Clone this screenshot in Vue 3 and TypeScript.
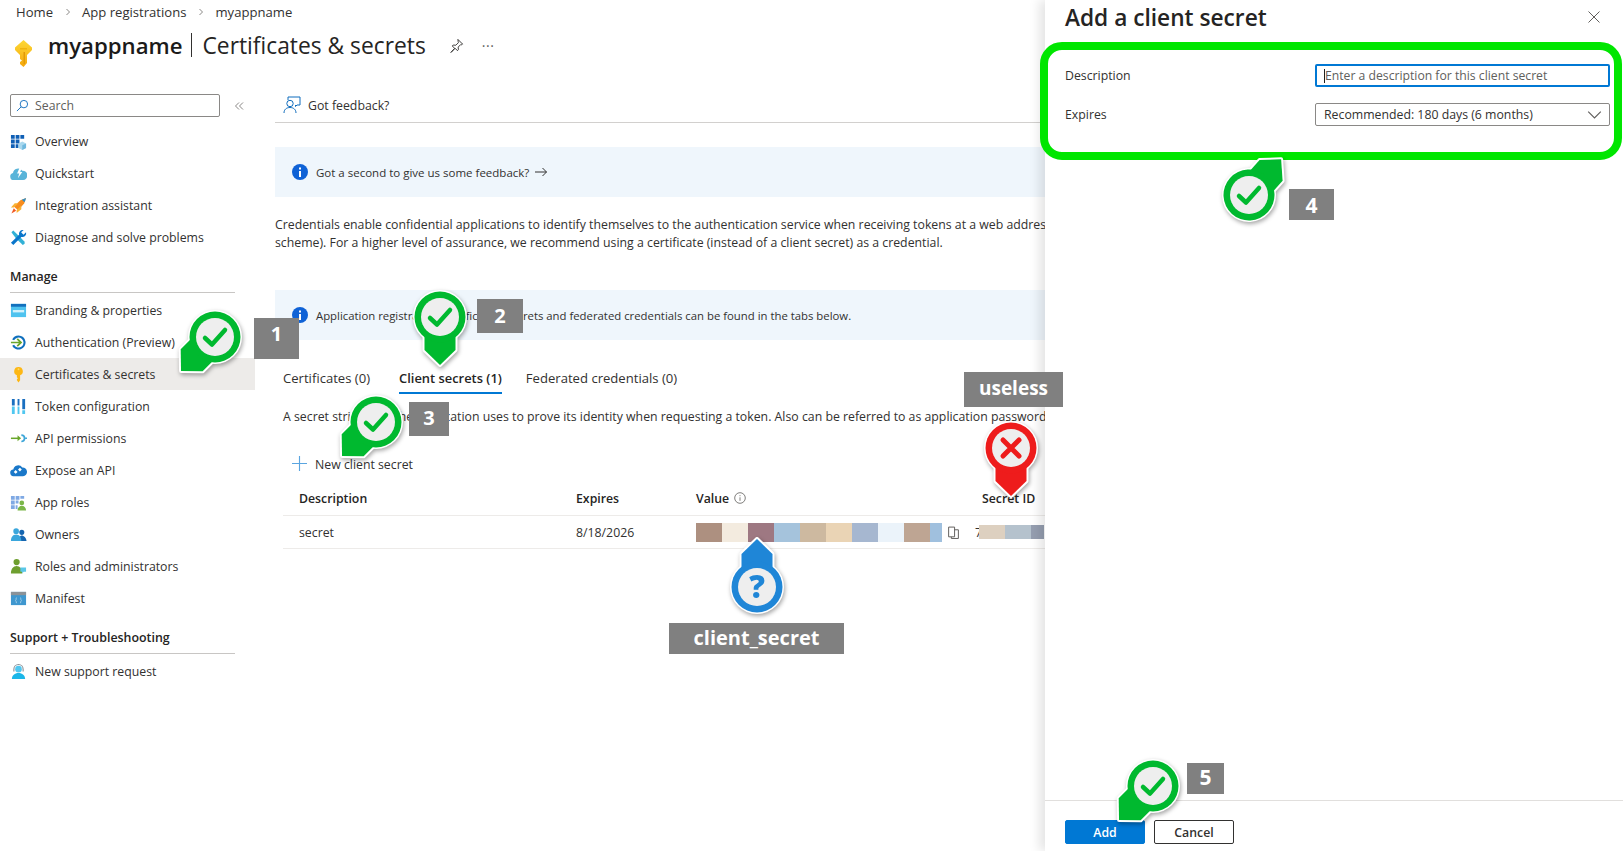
<script setup lang="ts">
type Shape = [string, string]
interface NavItem { label: string; shapes: Shape[]; active?: boolean }

const top: NavItem[] = [
  { label: 'Overview', shapes: [
    ['M1 2h4v4H1zM6 2h4v4H6zM11 2h4v4h-4zM1 7h4v4H1zM6 7h4v4H6zM1 12h4v4H1zM6 12h3v4H6z', '#0f5fb5'],
    ['M13 9l4 2v5l-4 2-4-2v-5z', '#a9d8ee'], ['M13 13l4-2v5l-4 2z', '#6fb8de'] ] },
  { label: 'Quickstart', shapes: [
    ['M4 16a3.800 3.800 0 0 1-.8-7.500A5.400 5.400 0 0 1 13 6a4.900 4.900 0 0 1 .8 10z', '#59b4d9'],
    ['M10.500 2L7.500 9h2.200L8.400 14l4.600-6.500h-2.300L13 2z', '#fff'] ] },
  { label: 'Integration assistant', shapes: [
    ['M4 10L11 3.500 17 1 15 7 8.500 14z', '#f78d1e'], ['M12.500 3L17 1 15.500 5.500z', '#2f8fc9'],
    ['M5 6.500h4L4 11H1zM12 9v4l-5 4v-3z', '#f9b233'], ['M4 12l2.500 2.500-5 3z', '#f15a24'] ] },
  { label: 'Diagnose and solve problems', shapes: [
    ['M1.500 3.500l2-2L10 8l5.500 5.500v2l-2 1.500L6 9.500z', '#32b1d6'],
    ['M13.500 1a4 4 0 0 0-3.900 5L1 14.500 3.500 17 12 8.400a4 4 0 0 0 5-4.900l-2.700 2.500-2.500-2.500L14.500 1z', '#0a76cb'] ] },
]
const manage: NavItem[] = [
  { label: 'Branding & properties', shapes: [
    ['M1 2h16v14H1z', '#4fc3ef'], ['M1 2h16v3H1z', '#1270bd'], ['M3 8.500h12v2.500H3z', '#d5f2fb'] ] },
  { label: 'Authentication (Preview)', shapes: [
    ['M9 1.500a7.500 7.500 0 1 1-6.700 10.900l2-1A5.300 5.300 0 1 0 4.300 6.700l-2-1A7.500 7.500 0 0 1 9 1.500z', '#0f6fbd'],
    ['M1 8.200h8.500L7 5.700l1.300-1.200L13 9l-4.700 4.500L7 12.300l2.500-2.500H1z', '#69a62a'] ] },
  { label: 'Certificates & secrets', active: true, shapes: [
    ['M9 1a4.500 4.500 0 0 1 1.700 8.700V15L9 17.500 7.300 15v-1l1-1-1-1v-2.300A4.500 4.500 0 0 1 9 1z', '#fdb714'],
    ['M9 2.500a1 1 0 1 1 0 2a1 1 0 0 1 0-2z', '#fcd964'] ] },
  { label: 'Token configuration', shapes: [
    ['M2 1h3v7H2zM8 1h2v7H8zM13 1h3v11h-3z', '#1a6fc0'],
    ['M2 9h3v8H2zM8 9h2v8H8zM13 13h3v4h-3z', '#50c7f0'] ] },
  { label: 'API permissions', shapes: [
    ['M1 8h10v1.600H1z', '#69a62a'], ['M8 5.500L11.500 8.800 8 12z', '#69a62a'],
    ['M12 4.500a4.300 4.300 0 1 1 0 8.600v-1.800a2.500 2.500 0 1 0 0-5z', '#3ea6d8'], ['M16 8h2v1.600h-2z', '#3ea6d8'] ] },
  { label: 'Expose an API', shapes: [
    ['M4 15a3.500 3.500 0 0 1-.5-7A5.200 5.200 0 0 1 13 5.800a4.600 4.600 0 0 1 .8 9.200z', '#1a78c9'],
    ['M6 8.500l2 2-2 2-2-2zM10.500 6l2 2-2 2-2-2z', '#fff'] ] },
  { label: 'App roles', shapes: [
    ['M1 2h4v4H1zM6 2h4v4H6zM11 2h4v3h-4zM1 7h4v4H1zM6 7h3v3H6zM1 12h4v4H1zM6 12h2v4H6z', '#7fa9e4'],
    ['M12.500 7a2.500 2.500 0 1 1 0 5a2.500 2.500 0 0 1 0-5z', '#7ab648'], ['M8 17.500c0-3 2-5 4.500-5s4.500 2 4.500 5z', '#7ab648'] ] },
  { label: 'Owners', shapes: [
    ['M12.500 4a2.700 2.700 0 1 1 0 5.400a2.700 2.700 0 0 1 0-5.400zM9 16c0-3.500 1.500-6 3.500-6s5 2.500 5 6z', '#1565b0'],
    ['M6.500 2.500a3 3 0 1 1 0 6a3 3 0 0 1 0-6zM1 16c0-4 2-7 5.500-7s5.500 3 5.500 7z', '#3aa6dc'] ] },
  { label: 'Roles and administrators', shapes: [
    ['M7 1a3.300 3.300 0 1 1 0 6.600A3.300 3.300 0 0 1 7 1zM1 16.500c0-5 2.500-8 6-8s6 3 6 8z', '#6e9f2f'],
    ['M11 10h6v4.500h-2.500l-1.500 2v-2h-2z', '#59c7e8'] ] },
  { label: 'Manifest', shapes: [
    ['M1 2h16v14H1z', '#3f97cf'], ['M1 2h16v3.500H1z', '#8b9298'],
    ['M7 8c-1 0-.8 1-.8 1.700S6 11 5.500 11c.5 0 .7.500.7 1.200S6 14 7 14v-.6c-.5 0-.3-.700-.3-1.300 0-.500-.2-.900-.5-1.100.3-.2.500-.600.5-1.100 0-.600-.2-1.300.3-1.300zM11 8c1 0 .8 1 .8 1.700s.2 1.300.7 1.300c-.5 0-.7.500-.7 1.200S12 14 11 14v-.6c.5 0 .3-.700.3-1.300 0-.500.2-.900.5-1.100-.3-.2-.5-.600-.5-1.100 0-.600.2-1.300-.3-1.300z', '#fff'] ] },
]
const support: NavItem[] = [
  { label: 'New support request', shapes: [
    ['M9 1a5.500 5.500 0 0 1 5.500 5.500V9h-1.200V6.500a4.300 4.300 0 0 0-8.600 0V9H3.500V6.500A5.500 5.500 0 0 1 9 1z', '#8a9299'],
    ['M9 3a3.500 3.500 0 1 1 0 7a3.500 3.500 0 0 1 0-7z', '#50c7f0'],
    ['M2 17c0-4 3-6.500 7-6.500s7 2.500 7 6.500z', '#1bb6e8'] ] },
]

const secretCells = ['#ad9080', '#f3ebdf', '#9e7882', '#a5c3dc', '#cdb9a0', '#ead4b5', '#a6b7d0', '#ebf3fa', '#bea593', '#a0c0de']
const idCells = ['#ddd0c0', '#b5c2cd', '#959eb0']

interface Pin { x: number; y: number; angle: number; color: string; kind: 'check' | 'cross' | 'help' }
const GREEN = '#00b92f'
const pins: Pin[] = [
  { x: 215, y: 337, angle: 45, color: GREEN, kind: 'check' },
  { x: 440, y: 317, angle: 0, color: GREEN, kind: 'check' },
  { x: 376, y: 422, angle: 45, color: GREEN, kind: 'check' },
  { x: 1249, y: 195, angle: -138, color: GREEN, kind: 'check' },
  { x: 1153, y: 786, angle: 45, color: GREEN, kind: 'check' },
  { x: 1011, y: 448, angle: 0, color: '#ee1c1c', kind: 'cross' },
  { x: 757, y: 587, angle: 180, color: '#1f86d7', kind: 'help' },
]
const PIN_SHAPE = 'M-15.500 10L-15.500 33L0 48L15.500 33L15.500 10Z'

interface Tag { text: string; x: number; y: number; w: number; h: number; size: number; lift: number }
const tags: Tag[] = [
  { text: '1', x: 254, y: 318, w: 45, h: 41, size: 20, lift: 10 },
  { text: '2', x: 477, y: 299, w: 46, h: 34, size: 20, lift: 2 },
  { text: '3', x: 409, y: 402, w: 40, h: 34, size: 20, lift: 4 },
  { text: '4', x: 1289, y: 189, w: 45, h: 31, size: 21, lift: 0 },
  { text: '5', x: 1187, y: 763, w: 37, h: 31, size: 21, lift: 3 },
  { text: 'useless', x: 964, y: 372, w: 99, h: 35, size: 19, lift: 4 },
  { text: 'client_secret', x: 669, y: 623, w: 175, h: 31, size: 20, lift: 2 },
]
</script>

<template>
  <div class="page">
    <header class="head">
      <nav class="crumbs">
        <span>Home</span>
        <svg class="crumb-sep" viewBox="0 0 8 8"><path d="M2.500 1l3 3-3 3" /></svg>
        <span>App registrations</span>
        <svg class="crumb-sep" viewBox="0 0 8 8"><path d="M2.500 1l3 3-3 3" /></svg>
        <span>myappname</span>
      </nav>
      <div class="title-row">
        <svg class="title-key" viewBox="0 0 19 27">
          <defs>
            <linearGradient id="keyfill" x1="0" y1="0" x2="0" y2="1">
              <stop offset="0" stop-color="#fdd835" />
              <stop offset="1" stop-color="#f5a70c" />
            </linearGradient>
          </defs>
          <path fill="url(#keyfill)" d="M9.500 0L18 7.500V10l-5 5v8l-3.500 4L6 24v-2l2-1.500L6 19v-4L1 10V7.500z" />
          <path fill="#f0b40e" d="M6 8h7v1.500H6z" />
          <path fill="#e29a08" d="M9.500 12h1.500v12h-1.500z" />
        </svg>
        <h1 class="title"><b>myappname</b><i class="title-sep"></i><span>Certificates &amp; secrets</span></h1>
        <svg class="pin-icon" viewBox="0 0 16 16"><path d="M9.500 1.500l5 5-1 .7-1-.2-2.700 2.700.2 2.800-1 1-2.500-2.500L2 15.500l4-4.500-2.500-2.500 1-1 2.800.2L10 5l-.2-1z" /></svg>
        <span class="more">···</span>
      </div>
    </header>

    <div class="body">
      <aside class="side">
        <div class="search-row">
          <div class="search">
            <svg class="search-icon" viewBox="0 0 14 14"><circle cx="8.500" cy="5.500" r="4" /><path d="M5.500 8.500L1 13" /></svg>
            <span>Search</span>
          </div>
          <svg class="collapse" viewBox="0 0 10 10"><path d="M5 1.500L1.500 5 5 8.500M9 1.500L5.500 5 9 8.500" /></svg>
        </div>
        <ul class="nav first">
          <li v-for="it in top" :key="it.label" class="item">
            <svg class="nav-icon" viewBox="0 0 18 18"><path v-for="(s, i) in it.shapes" :key="i" :d="s[0]" :fill="s[1]" /></svg>
            {{ it.label }}
          </li>
        </ul>
        <h3 class="group manage">Manage</h3>
        <ul class="nav">
          <li v-for="it in manage" :key="it.label" class="item" :class="{ active: it.active }">
            <svg class="nav-icon" viewBox="0 0 18 18"><path v-for="(s, i) in it.shapes" :key="i" :d="s[0]" :fill="s[1]" /></svg>
            {{ it.label }}
          </li>
        </ul>
        <h3 class="group support">Support + Troubleshooting</h3>
        <ul class="nav">
          <li v-for="it in support" :key="it.label" class="item">
            <svg class="nav-icon" viewBox="0 0 18 18"><path v-for="(s, i) in it.shapes" :key="i" :d="s[0]" :fill="s[1]" /></svg>
            {{ it.label }}
          </li>
        </ul>
      </aside>

      <main class="main">
        <div class="feedback">
          <svg class="feedback-icon" viewBox="0 0 18 18">
            <circle cx="7" cy="7.500" r="3.200" />
            <path d="M1 17c0-3.500 2.500-5.500 6-5.500s6 2 6 5.500M5 4V1h12v8h-3l-1.500 1.500V9" />
          </svg>
          <span>Got feedback?</span>
        </div>
        <div class="info first-info">
          <svg class="info-icon" viewBox="0 0 16 16"><circle cx="8" cy="8" r="8" fill="#0f62d6" /><path fill="#fff" d="M7 7h2v6H7zM7 3.500h2v2H7z" /></svg>
          <span>Got a second to give us some feedback?</span>
          <svg class="arrow" viewBox="0 0 14 10"><path d="M1 5h11.500M8.500 1l4 4-4 4" /></svg>
        </div>
        <p class="para">
          Credentials enable confidential applications to identify themselves to the authentication service when receiving tokens at a web addressable location (using an HTTPS<br />
          scheme). For a higher level of assurance, we recommend using a certificate (instead of a client secret) as a credential.
        </p>
        <div class="info second-info">
          <svg class="info-icon" viewBox="0 0 16 16"><circle cx="8" cy="8" r="8" fill="#0f62d6" /><path fill="#fff" d="M7 7h2v6H7zM7 3.500h2v2H7z" /></svg>
          <span>Application registration certificates, secrets and federated credentials can be found in the tabs below.</span>
        </div>
        <div class="tabs">
          <span class="tab">Certificates (0)</span>
          <span class="tab on">Client secrets (1)</span>
          <span class="tab">Federated credentials (0)</span>
        </div>
        <p class="blurb">A secret string that the application uses to prove its identity when requesting a token. Also can be referred to as application password.</p>
        <div class="cmd">
          <svg class="plus" viewBox="0 0 16 16"><path d="M8 0v16M0 8h16" /></svg>
          <span>New client secret</span>
        </div>
        <div class="grid thead">
          <span class="first-col">Description</span>
          <span>Expires</span>
          <span class="value-h">Value
            <svg class="tip" viewBox="0 0 12 12"><circle cx="6" cy="6" r="5.300" /><path d="M6 5.300v3.500M6 3.200v1" /></svg>
          </span>
          <span class="id-h">Secret ID</span>
        </div>
        <div class="grid trow">
          <span class="first-col">secret</span>
          <span>8/18/2026</span>
          <span class="secret-cell">
            <span class="blur">
              <i v-for="c in secretCells" :key="c" :style="{ background: c }"></i>
            </span>
            <svg class="copy" viewBox="0 0 12 12"><path d="M1.500 1h5.500v9H1.500zM7 3.500h3.500V11.500H4V10" /></svg>
          </span>
          <span class="id-cell">7<span class="blur small"><i v-for="c in idCells" :key="c" :style="{ background: c }"></i></span></span>
        </div>
      </main>
    </div>

    <section class="panel">
      <div class="panel-head">
        <h2>Add a client secret</h2>
        <svg class="close" viewBox="0 0 12 12"><path d="M.5.500l11 11M11.500.500l-11 11" /></svg>
      </div>
      <div class="form">
        <label>Description</label>
        <div class="field focus"><i class="caret"></i>Enter a description for this client secret</div>
        <label>Expires</label>
        <div class="field select">
          <span>Recommended: 180 days (6 months)</span>
          <svg class="chev" viewBox="0 0 12 7"><path d="M.5.500L6 6l5.500-5.500" /></svg>
        </div>
      </div>
      <div class="panel-foot">
        <button class="btn primary">Add</button>
        <button class="btn">Cancel</button>
      </div>
    </section>

    <div class="green-frame"></div>

    <svg
      v-for="(p, i) in pins"
      :key="i"
      class="marker"
      viewBox="-60 -60 120 120"
      :style="{ left: p.x - 60 + 'px', top: p.y - 60 + 'px' }"
    >
      <g :transform="`rotate(${p.angle})`">
        <circle r="25" fill="#fff" stroke="#fff" stroke-width="4" />
        <path :d="PIN_SHAPE" fill="#fff" stroke="#fff" stroke-width="4" stroke-linejoin="round" />
        <path :d="PIN_SHAPE" :fill="p.color" />
        <circle r="25.500" :fill="p.color" />
      </g>
      <circle r="19" fill="#eeeeee" />
      <path v-if="p.kind === 'check'" d="M-10 1L-3 7.500L10 -7" fill="none" :stroke="p.color" stroke-width="4.500" stroke-linecap="round" stroke-linejoin="round" />
      <path v-else-if="p.kind === 'cross'" d="M-8 -8L8 8M8 -8L-8 8" fill="none" :stroke="p.color" stroke-width="5" stroke-linecap="round" />
      <text v-else y="11" text-anchor="middle" class="help" :fill="p.color">?</text>
    </svg>

    <div
      v-for="t in tags"
      :key="t.text"
      class="tag"
      :style="{ left: t.x + 'px', top: t.y + 'px', width: t.w + 'px', height: t.h + 'px', fontSize: t.size + 'px', paddingBottom: t.lift + 'px' }"
    >{{ t.text }}</div>
  </div>
</template>

<style>
html, body { margin: 0; background: #fff; overflow: hidden; }
</style>

<style scoped>
.page {
  position: relative;
  width: 1623px;
  height: 851px;
  overflow: hidden;
  background: #fff;
  color: #323130;
  font-family: "Open Sans", "Noto Sans", sans-serif;
  font-size: 12.3px;
}
.head { height: 94px; }
.crumbs { display: flex; align-items: center; height: 25px; box-sizing: border-box; padding: 0 0 2px 16px; gap: 9.500px; font-size: 13.100px; }
.crumb-sep { width: 8px; height: 8px; fill: none; stroke: #8a8886; stroke-width: 1; margin: 0 1px; }
.title-row { display: flex; align-items: center; height: 40px; padding-left: 14px; }
.title-key { width: 19px; height: 27px; margin: 16px 15px 0 0; }
.title { margin: 0; font-size: 22.800px; font-weight: 400; display: flex; align-items: center; color: #252423; white-space: nowrap; }
.title b { font-size: 22.200px; font-weight: 600; color: #1b1a19; }
.title-sep { width: 1px; height: 24px; background: #323130; margin: 0 10px 0 9px; }
.pin-icon { width: 15px; height: 15px; margin-left: 23px; fill: none; stroke: #323130; stroke-width: 1; }
.more { margin-left: 18px; color: #605e5c; font-size: 14px; letter-spacing: .5px; }

.body { display: flex; }
.side { width: 275px; flex: none; }
.search-row { display: flex; align-items: center; height: 23px; padding-left: 10px; }
.search {
  box-sizing: border-box;
  width: 210px;
  height: 23px;
  border: 1px solid #8a8886;
  border-radius: 2px;
  display: flex;
  align-items: center;
  color: #605e5c;
  padding-left: 24px;
  position: relative;
}
.search-icon { position: absolute; left: 5px; top: 4px; width: 13px; height: 13px; fill: none; stroke: #0f6cbd; stroke-width: 1; }
.collapse { width: 10px; height: 10px; margin-left: 14px; fill: none; stroke: #8a8886; stroke-width: 1; }
.nav { list-style: none; margin: 0; padding: 0; }
.first { margin-top: 8px; }
.item {
  display: flex;
  align-items: center;
  height: 32px;
  width: 255px;
  box-sizing: border-box;
  padding-left: 10px;
  gap: 8px;
  white-space: nowrap;
}
.item.active { background: #edebe9; }
.nav-icon { width: 17px; height: 17px; flex: none; }
.group {
  margin: 0 0 1px 10px;
  width: 225px;
  font-size: 12.400px;
  font-weight: 600;
  line-height: 18px;
  border-bottom: 1px solid #c8c6c4;
  color: #252423;
}
.manage { padding: 15px 0 6px; }
.support { padding: 15px 0 6px; }

.main { width: 1348px; flex: none; overflow: hidden; white-space: nowrap; }
.feedback {
  box-sizing: border-box;
  height: 29px;
  padding: 0 0 5px 8px;
  display: flex;
  align-items: center;
  gap: 7px;
  border-bottom: 1px solid #d2d0ce;
}
.feedback-icon { width: 18px; height: 18px; fill: none; stroke: #0f6cbd; stroke-width: 1; margin-top: -2px; }
.info {
  height: 50px;
  background: #eff6fc;
  display: flex;
  align-items: center;
  padding-left: 17px;
  gap: 8px;
  font-size: 11.350px;
}
.first-info { margin-top: 24px; font-size: 11.500px; }
.second-info { margin-top: 39px; }
.info-icon { width: 16px; height: 16px; flex: none; }
.arrow { width: 14px; height: 10px; fill: none; stroke: #323130; stroke-width: 1; margin-left: -3px; }
.para { margin: 19px 0 0; line-height: 17.500px; }
.tabs { display: flex; margin: 24px 0 0 8px; gap: 24px; font-size: 13.100px; }
.tab { padding: 5px 0; line-height: 18px; border-bottom: 2px solid transparent; }
.tab.on { font-size: 12.900px; font-weight: 600; border-bottom-color: #0078d4; color: #252423; margin-left: 5px; }
.blurb { margin: 14px 0 0 8px; line-height: 18px; }
.cmd { display: flex; align-items: center; height: 28px; margin: 24px 0 0 17px; gap: 8px; }
.plus { width: 15px; height: 15px; fill: none; stroke: #5aa5e0; stroke-width: 1.200; margin-top: -1px; }
.grid {
  display: grid;
  grid-template-columns: 293px 120px 279px 1fr;
  margin-left: 8px;
  align-items: center;
  border-bottom: 1px solid #edebe9;
}
.first-col { padding-left: 16px; }
.thead { height: 38px; padding-top: 3px; box-sizing: border-box; font-weight: 600; color: #252423; }
.value-h { display: flex; align-items: center; gap: 5px; }
.tip { width: 12px; height: 12px; fill: none; stroke: #605e5c; stroke-width: .8; }
.id-h { padding-left: 7px; }
.trow { height: 33px; box-sizing: border-box; }
.secret-cell { display: flex; align-items: center; }
.blur { display: flex; height: 19px; width: 246px; }
.blur i { display: block; width: 26px; height: 100%; }
.blur i:last-child { width: 12px; }
.copy { width: 13px; height: 13px; margin-left: 5px; fill: none; stroke: #605e5c; stroke-width: .9; }
.id-cell { display: flex; align-items: center; }
.blur.small { height: 14px; width: 65px; margin-left: -3px; }
.blur.small i { flex: none; }
.blur.small i:last-child { width: 13px; }

.panel {
  position: absolute;
  top: 0;
  right: 0;
  bottom: 0;
  left: 1045px;
  display: flex;
  flex-direction: column;
  background: #fff;
  box-shadow: -6px 0 10px rgba(0, 0, 0, .1);
}
.panel-head { display: flex; align-items: center; justify-content: space-between; height: 34px; padding: 0 23px 0 20px; }
.panel-head h2 { margin: 0; font-size: 22.700px; font-weight: 600; color: #252423; white-space: nowrap; }
.close { width: 12px; height: 12px; fill: none; stroke: #605e5c; stroke-width: 1; }
.form {
  display: grid;
  grid-template-columns: 250px 295px;
  grid-auto-rows: 23px;
  row-gap: 16px;
  margin: 30px 0 0 20px;
  align-items: center;
}
.field {
  box-sizing: border-box;
  height: 23px;
  border: 1px solid #8a8886;
  border-radius: 2px;
  padding-left: 8px;
  display: flex;
  align-items: center;
  white-space: nowrap;
}
.focus { border: 2px solid #0078d4; padding-left: 7px; color: #605e5c; font-size: 12.200px; }
.caret { width: 1px; height: 14px; background: #201f1e; margin-right: 0; }
.select { justify-content: space-between; padding-right: 7px; }
.chev { width: 15px; height: 8px; fill: none; stroke: #605e5c; stroke-width: 1; }
.panel-foot {
  margin-top: auto;
  border-top: 1px solid #e1dfdd;
  padding: 19px 20px 7px;
  display: flex;
  gap: 9px;
}
.btn {
  box-sizing: border-box;
  width: 80px;
  height: 24px;
  padding: 0;
  border: 1px solid #323130;
  border-radius: 2px;
  background: #fff;
  color: #323130;
  font: 600 12.300px "Open Sans", "Noto Sans", sans-serif;
}
.btn.primary { background: #0078d4; border-color: #0078d4; color: #fff; }

.green-frame {
  position: absolute;
  left: 1040px;
  top: 42px;
  width: 582px;
  height: 118px;
  box-sizing: border-box;
  border: 8px solid #00e600;
  border-radius: 22px;
}
.marker {
  position: absolute;
  width: 120px;
  height: 120px;
  filter: drop-shadow(1px 2px 2px rgba(0, 0, 0, .35));
}
.help { font: 800 31px "Open Sans", sans-serif; }
.tag {
  position: absolute;
  box-sizing: border-box;
  background: #808080;
  color: #fff;
  font-weight: 700;
  display: flex;
  align-items: center;
  justify-content: center;
  white-space: nowrap;
}
</style>
